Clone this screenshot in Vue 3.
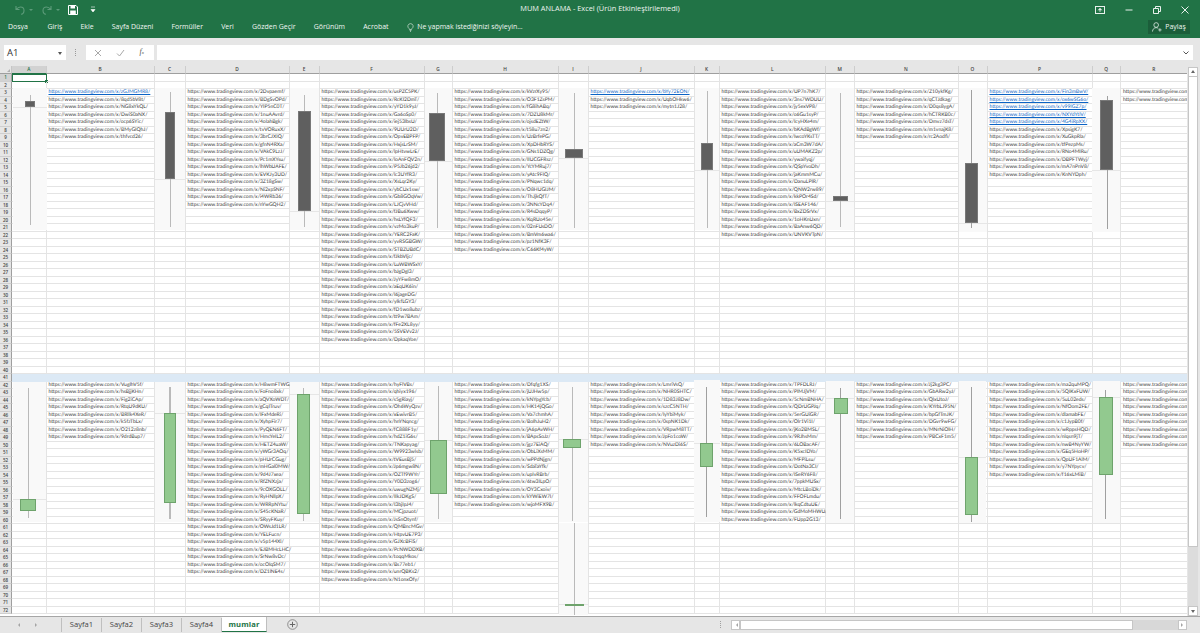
<script setup>
const widths = [34.5,108,31,104,30,105,28,106,30,106,25,106.5,28.5,104,29,105,28.5,66.5]
const letters = 'ABCDEFGHIJKLMNOPQR'.split('')
const gridCols = '12px ' + widths.map(w => w + 'px').join(' ')

const data = {
  B: [[3,'zGJMGMR8 8qd5bV8t NG8xYkQL DwiS0aNX ocp6SYic BMyGIQhJ thfvcd26'],[42,'VugIhV5f hsBjjKHn Fig2iCAp RtqU9dKU BRllk4XeR k5fzTbLx O212z8nb 9drdBup7']],
  D: [[3,'2Dvpaemf BDgSvOPd YIP5nC0T 1nuAAvrd 4olahBgk tvVORuxX 3brCJXIQ gfnN4RXa VAkC9LzJ Pc1mXYsu lhWbUAFE EVKJy3UD 3Z18gSw Ni2xpSNF i4WRb36 nYwGQH2'],[42,'H8wmFTWG FoFno8xk aQVXoWDT gCqITruv IFxMdeRi XyhpFir7 PyQEN6FT HmcYeIL2 HETZ4uaW yWGr3AOq pHUrCGug mHGal0MW 9d4J7xea RfZNXzja 9cOXGOLL RyHNlIpX WRRpNYtu S45cKNaR SRyyFKuy OWsJd1LR YELFucn v5p144Xl EJBMHcLHC SrNw8vDc ocOIqSM7 DZ1lNE4s']],
  F: [[3,'usPZC5PK RcKI2DmT yYD1k9yJ Ga6oSp0 iej53lbsU 9UUrU2D OpvEBPFP HxjsLrSM lpHtvwLrE loAnFQV2n P5Jb26jd2 lc3UYfR3 XsLqr2Ky ybCUx1sw Gb8GOqVw LJCjvVHd fJBu6Xww hsLYfQF3 vzMo3kuP YERC2FaK yvRSGBGW STBZUBdC fJkbVIjc LuWBWSxY bJgDgl3 JyYFw8mO aEqUK6in I6jageDG yIkfLGY3 fD1wo8ubz tt9w7BAm fFe2XL8yy 5SVEVv2J DpkaqYoe'],[42,'hyFlVBs qhiyx196 s5gRiayj Oh6WyQzv xEwivrB5 hnYNqncg fC888F1y hdZ1iG6s TNKapyag W9923wlsb tVEusBj5 Jp6mgw8N OZTf9WYr Y0D3zog6 uwugNZMj IIkJDKgS I3bjIpJ4 MCjpzuot JsSnOtynf QMBncMGv HtpvUE7P3 GJXcBFiS PcNWDDXB toqqMkos Bs77eb1 unrQBKs2 N1onxOfy']],
  H: [[3,'kVzrXy95 O3F1ZsPM fG8ihABq 7DZU8kMr ojsdEZtW t58u7zn2 UzBrfePG XpDHbRYS GNs1DZQg IIUCGFRsz YcYMRuj7 yAtc9FIQ PNqwc1dq O8HUGIJM ThJjkQfT 3NNcYDq4 R4sDqqyP KqRUo45e 02nFUsDO BmVm6wa6 pz1NfK3F C66Kf4yW'],[42,'Dfqfg1XS jUJHw5p kNYpgYcb HK14jQGo Va7chmhA BoIhJuH2 jA6pAvWH BApsSoJz jgz7EiAQ ObLiXsMM wPPdNjgn SdaTaYfk upIvRBrb 6tw3ILpO OY3Cxoiv kYWiEW7I wjoMFX9B']],
  J: [[3,'bYy72EON UqbOHkw6 mytn1J28'],[42,'LmriVsQ NHR0SHTC 1D83J8Dw szcC5NTH IyYbiMyk 0spNK1Dk VRpwM8TT JpFo1coW NVuzDi6S']],
  L: [[3,'UP7n7hK7 3ns7WDUU jy5exVP8 o6Gu1syP IcyHXe4m bKAdBgWf IwcoYKsTT aCm3W7dA uUMAKZ2p ywaifyqj QSpYvoDh jaKmmMCu DanuLPIR QNW2rw89 kkPOr4Sd ISEAF146 BxZDSrVx 1oHKnUxn BaAnw6QD UNVKVTpN'],[42,'TPFDLRJ PIMJjVM 5cNmBNHA QDrUGPJq 5erGUiGR Olr1Vi1I jKo2BMSL 9RJhsMm 6LOBacAF K5xcIDYo MFPiLsu DotNa3CI ISeRY6F8 7ppkMUSx MtcLBoiDk FFOFLmdu lkqCdtuUE GdMoMHWU FUpp2G13']],
  N: [[3,'Z10ykfKg qCTJdkag D0qs8ygA hCTRKB0c Dmvz7dsT m1vnajK8 rc2Aodfi'],[42,'Jj2kg3PC GbARw2yJ QlxUtoJ KYrbLJ95N bpGfTmJK DGvr9wFG MNrNiOlH PBCxF1m5']],
  P: [[3,'Fin3mBwV ox6wSG6o v99IGZ7p NXYdYtlV 4G4iRpXX XpsigK7 XuGkpRla tfPezpMs RNo4MIRu DBPFTWyj mA7nPnV8 KnNYDph'],[42,'ma2quMPQ 5QIKxFUW 5uL02eds NfOom2FE dlamabFE c1JypB0f wRppsHQD nlqsn9jT nwB4NyYW GEq5HoHP QpUF1AlM y7NYpycv f16xLMiB']],
  R: [[3,'TbQw2mLs PxK9dVna'],[42,'hT3kPzQa Mn8vYc2L Rd5sXwJe uK7gFq1B Zp4tNhOi Lc6yVm9A Qe2jSrUx Wf8bGk3D Ny5oHt7C']]
}
const links = new Set(['B3','J3','P3','P4','P5','P6','P7'])
const cellText = {}
for (const col in data) {
  for (const [start, list] of data[col]) {
    list.split(' ').forEach((id, i) => { cellText[col + (start + i)] = 'https://www.tradingview.com/x/' + id + '/' })
  }
}
const rows = Array.from({ length: 72 }, (_, i) => i + 1)

const SHEET_TOP = 66
const charts = [
  { x:12.5,w:34,y:88,h:142,wx:30,wt:95,wb:225,bl:25,br:35,bt:101,bb:107,ax:107,t:'d' },
  { x:155,w:30,y:88,h:142,wx:170,wt:92,wb:227,bl:165,br:175,bt:112,bb:179,ax:179,t:'d' },
  { x:290,w:29,y:88,h:142,wx:304,wt:95,wb:227,bl:297.5,br:311,bt:111,bb:211,ax:211,t:'d' },
  { x:425,w:27,y:88,h:142,wx:437,wt:93,wb:228,bl:429,br:445,bt:113,bb:161,ax:161,t:'d' },
  { x:559,w:29,y:88,h:142,wx:574,wt:93,wb:228,bl:565,br:583,bt:149,bb:158,ax:158,t:'d' },
  { x:695,w:24,y:88,h:142,wx:707,wt:91,wb:228,bl:701,br:713,bt:143,bb:170,ax:170,t:'d' },
  { x:826,w:28,y:88,h:142,wx:840,wt:93,wb:227,bl:833,br:848,bt:196,bb:201,ax:201,t:'d' },
  { x:959,w:28,y:88,h:144,wx:971,wt:90,wb:228,bl:964.5,br:977.5,bt:163,bb:223,ax:223,t:'d',dk:1 },
  { x:1092,w:28,y:88,h:144,wx:1107,wt:96,wb:229,bl:1100,br:1113,bt:100,bb:170,ax:170,t:'d',dk:1 },
  { x:13,w:33,y:382,h:140,wx:28,wt:388,wb:518,bl:20,br:36,bt:499,bb:511,ax:499,t:'g' },
  { x:155,w:30,y:382,h:140,wx:169.5,wt:387,wb:519,bl:164,br:176,bt:413,bb:503,ax:413,t:'g' },
  { x:290,w:29,y:382,h:140,wx:303,wt:388,wb:521,bl:296.5,br:310,bt:394,bb:514,ax:394,t:'g' },
  { x:425,w:27,y:382,h:140,wx:438,wt:386,wb:519,bl:430,br:446.5,bt:440,bb:494,ax:440,t:'g' },
  { x:559,w:29,y:382,h:140,wx:572,wt:387,wb:521,bl:563,br:581,bt:439,bb:448,ax:439,t:'g' },
  { x:559,w:29,y:523,h:92,wx:574,wt:523,wb:615,bl:565,br:583.5,bt:604,bb:605,ax:604,t:'g' },
  { x:694,w:26,y:380,h:142,wx:706,wt:387,wb:517,bl:699.5,br:713,bt:443,bb:467,ax:443,t:'g',dk:1 },
  { x:826,w:28,y:381,h:142,wx:840,wt:388,wb:519,bl:833.5,br:847.5,bt:398,bb:414,ax:398,t:'g',dk:1 },
  { x:959,w:27,y:381,h:142,wx:971.5,wt:387,wb:522,bl:965,br:978,bt:457,bb:515,ax:457,t:'g',dk:1 },
  { x:1093,w:27,y:381,h:142,wx:1105.5,wt:390,wb:519,bl:1099,br:1113,bt:397,bb:475,ax:397,t:'g',dk:1 }
]
function box(c) { return { left: c.x + 'px', top: (c.y - SHEET_TOP) + 'px', width: c.w + 'px', height: c.h + 'px' } }
function wick(c) { return { left: (c.wx - c.x - 0.5) + 'px', top: (c.wt - c.y) + 'px', height: (c.wb - c.wt) + 'px' } }
function body(c) { return { left: (c.bl - c.x) + 'px', top: (c.bt - c.y) + 'px', width: (c.br - c.bl) + 'px', height: (c.bb - c.bt) + 'px' } }
function axis(c) { return { top: (c.ax - c.y) + 'px' } }

const tabs = ['Giriş','Ekle','Sayfa Düzeni','Formüller','Veri','Gözden Geçir','Görünüm','Acrobat']
const sheets = ['Sayfa1','Sayfa2','Sayfa3','Sayfa4']
</script>

<template>
  <div class="app">
    <header class="ribbon">
      <div class="titlebar">
        <div class="qat">
          <svg class="qi dim" viewBox="0 0 12 10" width="12" height="10"><path d="M2 1v3.5h3.5M2.3 4.3C3.6 2.7 5 2 6.5 2c2 0 3.5 1.5 3.5 3.4S8.7 9 7 9.2" fill="none" stroke="currentColor" stroke-width="1.1"/></svg>
          <span class="caret dim"></span>
          <svg class="qi dim redo" viewBox="0 0 12 10" width="12" height="10"><path d="M10 1v3.5H6.500M9.700 4.300C8.400 2.700 7 2 5.500 2c-2 0-3.500 1.500-3.500 3.400S3.300 9 5 9.200" fill="none" stroke="currentColor" stroke-width="1.100"/></svg>
          <span class="caret dim"></span>
          <svg class="qi save" viewBox="0 0 10 10" width="10" height="10"><path d="M.5.500h7.500l1.500 1.500v7.500h-9z" fill="none" stroke="#fff" stroke-width="1"/><path d="M2.500 1h4.500v2.500H2.500zM2.200 5.500h5.600v4H2.200z" fill="#fff"/></svg>
          <svg class="qi cust" viewBox="0 0 6 7" width="6" height="7"><path d="M1 1h4M1 3.500l2 2.500 2-2.500z" fill="#fff" stroke="#fff" stroke-width=".6"/></svg>
        </div>
        <div class="doc-title">MUM ANLAMA - Excel (Ürün Etkinleştirilemedi)</div>
        <div class="winctl">
          <svg viewBox="0 0 10 8" width="10" height="8"><rect x=".5" y=".5" width="9" height="7" fill="none" stroke="#e8f1ec"/><path d="M5 6V2.500M3.200 4.200 5 2.300l1.800 1.900" fill="#e8f1ec" stroke="#e8f1ec" stroke-width=".8"/></svg>
          <svg viewBox="0 0 8 8" width="8" height="8"><path d="M.5 4h7" stroke="#e8f1ec"/></svg>
          <svg viewBox="0 0 8 8" width="8" height="8"><path d="M.5 2.500h5v5h-5zM2.500 2.500V.5h5v5h-2" fill="none" stroke="#e8f1ec"/></svg>
          <svg viewBox="0 0 8 8" width="8" height="8"><path d="M.5.500l7 7M7.500.500l-7 7" stroke="#e8f1ec"/></svg>
        </div>
      </div>
      <nav class="tabrow">
        <span class="tab dosya">Dosya</span>
        <span v-for="t in tabs" :key="t" class="tab">{{ t }}</span>
        <span class="tell">
          <svg viewBox="0 0 8 10" width="7" height="9"><path d="M4 .6a3 3 0 0 1 1.700 5.500c-.4.300-.5.700-.5 1.200H2.800c0-.5-.1-.9-.5-1.200A3 3 0 0 1 4 .6zM3 8.400h2M3.400 9.500h1.200" fill="none" stroke="#e8f1ec" stroke-width=".7"/></svg>
          <span>Ne yapmak istediğinizi söyleyin...</span>
        </span>
        <span class="share">
          <svg viewBox="0 0 12 12" width="10" height="10"><circle cx="5" cy="3.600" r="2.800" fill="none" stroke="#e8f1ec" stroke-width=".9"/><path d="M.5 11.500c.4-3 2-4.700 4.500-4.700 1 0 1.800.3 2.500.8M9.500 7.500v4M7.500 9.500h4" fill="none" stroke="#e8f1ec" stroke-width=".9"/></svg>
          <span>Paylaş</span>
        </span>
      </nav>
    </header>

    <section class="formula">
      <div class="namebox"><span>A1</span><i class="down"></i></div>
      <span class="grip"></span>
      <div class="fbtns">
        <svg viewBox="0 0 8 8" width="8" height="8"><path d="M1 1l6 6M7 1 1 7" stroke="#a8a8a8" stroke-width="1"/></svg>
        <svg viewBox="0 0 9 8" width="9" height="8"><path d="M1 4.500 3.500 7 8 1" fill="none" stroke="#a8a8a8" stroke-width="1"/></svg>
        <span class="fx">f<small>x</small></span>
      </div>
      <div class="finput"><svg viewBox="0 0 6 4" width="6" height="4"><path d="M.5.500 3 3 5.500.500" fill="none" stroke="#555" stroke-width="1"/></svg></div>
    </section>

    <section class="sheet">
      <div class="grid" :style="{ gridTemplateColumns: gridCols }">
        <div class="corner"><i></i></div>
        <div v-for="l in letters" :key="l" class="colhead" :class="{ on: l === 'A' }">{{ l }}</div>
        <template v-for="r in rows" :key="r">
          <div class="rowhead" :class="{ on: r === 1 }">{{ r }}</div>
          <div v-for="l in letters" :key="l + r" class="cell" :class="{ blue: r === 41, sel: r === 1 && l === 'A' }">
            <span v-if="cellText[l + r]" :class="{ link: links.has(l + r) }">{{ cellText[l + r] }}</span>
          </div>
        </template>
      </div>
      <div v-for="(c, i) in charts" :key="i" class="chart" :style="box(c)">
        <div class="axis" :style="axis(c)"></div>
        <div class="wick" :class="{ dk: c.dk }" :style="wick(c)"></div>
        <div class="candle" :class="c.t === 'g' ? 'green' : 'dark'" :style="body(c)"></div>
      </div>
      <aside class="vscroll">
        <div class="vbtn"><i class="up"></i></div>
        <div class="vthumb"></div>
        <div class="vtrack"></div>
        <div class="vbtn"><i class="dn"></i></div>
      </aside>
    </section>

    <footer class="tabsbar">
      <div class="navs"><i class="l"></i><i class="r"></i></div>
      <div v-for="s in sheets" :key="s" class="sheet-tab">{{ s }}</div>
      <div class="sheet-tab active">mumlar</div>
      <svg class="plus" viewBox="0 0 11 11" width="11" height="11"><circle cx="5.500" cy="5.500" r="4.800" fill="none" stroke="#777" stroke-width=".8"/><path d="M5.500 2.800v5.400M2.800 5.500h5.400" stroke="#666" stroke-width="1"/></svg>
      <span class="vdots"></span>
      <div class="hscroll">
        <div class="hbtn"><i class="l"></i></div>
        <div class="hthumb"></div>
        <div class="htrack"></div>
        <div class="hbtn"><i class="r"></i></div>
      </div>
    </footer>
  </div>
</template>

<style scoped>
.app { width: 1200px; height: 633px; overflow: hidden; display: flex; flex-direction: column; background: #e6e6e6; font-family: "Open Sans", "Liberation Sans", sans-serif; }

.ribbon { height: 38px; background: #217346; color: #f1f6f3; flex: none; display: flex; flex-direction: column; }
.titlebar { height: 19px; display: flex; align-items: center; position: relative; }
.qat { display: flex; align-items: center; padding-left: 14px; }
.qi.dim { color: #5d9b7a; }
.caret { width: 0; height: 0; border: 2px solid transparent; border-top: 2px solid #5d9b7a; margin: 2px 8px 0 3px; }
.cust { margin-left: 12px; }
.doc-title { position: absolute; left: 0; right: 0; top: 3px; text-align: center; font-size: 7.4px; color: #eef4f0; line-height: 11px; }
.winctl { margin-left: auto; display: flex; align-items: center; gap: 20px; padding-right: 11px; }

.tabrow { flex: 1; display: flex; align-items: flex-start; padding: 2px 10px 0 8px; gap: 18.2px; font-size: 6.95px; line-height: 10px; }
.tab { white-space: nowrap; padding-top: 1px; }
.dosya { margin-right: 1.5px; }
.tell { display: flex; align-items: center; gap: 3.5px; margin-left: 0; white-space: nowrap; padding-top: 1px; }
.share { margin-left: auto; background: #1b5e3a; height: 14px; width: 42px; display: flex; align-items: center; justify-content: center; gap: 3px; margin-top: -1px; }

.formula { height: 28px; flex: none; display: flex; align-items: flex-start; padding: 7px 0 0 4px; box-sizing: border-box; gap: 0; }
.namebox { width: 62px; height: 15px; background: #fff; display: flex; align-items: center; justify-content: space-between; padding: 0 4px 0 3px; box-sizing: border-box; font-size: 9.5px; color: #333; }
.down { width: 0; height: 0; border: 2.5px solid transparent; border-top: 3px solid #555; margin-top: 3px; }
.grip { width: 2px; height: 7px; margin: 4px 8px 0 9px; border-left: 1px dotted #999; box-sizing: border-box; }
.fbtns { width: 68px; height: 15px; background: #fff; display: flex; align-items: center; justify-content: space-between; padding: 0 10px 0 8px; box-sizing: border-box; margin-left: 1px; }
.fx { font-family: "Liberation Serif", serif; font-style: italic; font-size: 8px; color: #555; line-height: 10px; }
.fx small { font-size: 5px; }
.finput { width: 1036px; height: 15px; margin-left: 3px; background: #fff; display: flex; align-items: center; justify-content: flex-end; padding-right: 4px; box-sizing: border-box; }

.sheet { flex: 1; position: relative; overflow: hidden; min-height: 0; }
.grid { width: 1187px; height: 550px; display: grid; grid-template-rows: 8px repeat(72, 7.5px) 1fr; background: #fff; overflow: hidden; }
.corner { background: #e6e6e6; border-bottom: 1px solid #9f9f9f; border-right: 1px solid #c6c6c6; box-sizing: border-box; position: relative; }
.corner i { position: absolute; right: 1px; bottom: 1px; width: 0; height: 0; border-left: 3px solid transparent; border-bottom: 3px solid #b0b0b0; }
.colhead { background: #e6e6e6; border-right: 1px solid #cdcdcd; border-bottom: 1px solid #9f9f9f; box-sizing: border-box; font-size: 4.8px; line-height: 7px; text-align: center; color: #444; font-weight: 600; }
.colhead.on { background: #d2d2d2; border-bottom: 1px solid #217346; color: #217346; }
.rowhead { background: #e6e6e6; border-right: 1px solid #9f9f9f; border-bottom: 1px solid #cfcfcf; box-sizing: border-box; font-size: 4.5px; line-height: 7px; text-align: center; color: #444; font-weight: 600; overflow: hidden; }
.rowhead.on { background: #d2d2d2; color: #217346; }
.cell { border-right: 1px solid #e4e4e4; border-bottom: 1px solid #e4e4e4; box-sizing: border-box; font-family: Lato, "Open Sans", sans-serif; font-size: 5.05px; line-height: 6.5px; color: #3a3a3a; white-space: nowrap; padding-left: 2px; min-width: 0; position: relative; text-rendering: geometricPrecision; }
.cell.blue { background: #dce9f5; border-color: #dce9f5; }
.cell.sel { box-shadow: inset 0 0 0 1px #217346; border: 0; }
.cell.sel::after { content: ""; position: absolute; right: -1.5px; bottom: -1.5px; width: 3px; height: 3px; background: #217346; }
.link { color: #0b63c5; text-decoration: underline; }

.chart { position: absolute; background: #f9f9f9; z-index: 2; }
.axis { position: absolute; left: 0; right: 0; height: 1px; background: #e6e6e6; }
.wick { position: absolute; width: 1.5px; background: #bababa; }
.wick.dk { width: 1px; background: #a0a0a0; }
.candle { position: absolute; box-sizing: border-box; }
.candle.dark { background: #5f5f5f; border: 1px solid #787878; }
.candle.green { background: #92c98f; border: 1px solid #6ea36c; }

.vscroll { position: absolute; right: 2px; top: 1px; bottom: 0; width: 10px; display: flex; flex-direction: column; z-index: 3; }
.vbtn { height: 10px; background: #fff; border: 1px solid #c6c6c6; box-sizing: border-box; display: flex; align-items: center; justify-content: center; flex: none; }
.vthumb { height: 470px; background: #fff; border: 1px solid #c6c6c6; border-top: 0; box-sizing: border-box; flex: none; }
.vtrack { flex: 1; background: #dcdcdc; }
.up { width: 0; height: 0; border: 2px solid transparent; border-bottom: 3px solid #666; margin-top: -3px; }
.dn { width: 0; height: 0; border: 2px solid transparent; border-top: 3px solid #666; margin-bottom: -3px; }

.tabsbar { height: 17px; flex: none; display: flex; align-items: flex-start; background: #e6e6e6; border-top: 1px solid #a6a6a6; box-sizing: border-box; position: relative; font-size: 7.6px; color: #444; }
.navs { width: 62px; height: 14px; display: flex; align-items: center; gap: 15px; padding-left: 16px; box-sizing: border-box; border-right: 1px solid #bfbfbf; flex: none; margin-top: 1px; }
.navs .l, .hbtn .l { width: 0; height: 0; border: 2px solid transparent; border-right: 2.5px solid #a5a5a5; }
.navs .r, .hbtn .r { width: 0; height: 0; border: 2px solid transparent; border-left: 2.5px solid #a5a5a5; }
.sheet-tab { width: 40px; height: 14px; margin-top: 1px; line-height: 13px; text-align: center; border-right: 1px solid #bfbfbf; box-sizing: border-box; flex: none; }
.sheet-tab.active { background: #fff; width: 45px; height: 15px; margin-top: 0; line-height: 14px; font-weight: 700; color: #217346; border: 0; border-bottom: 1px solid #217346; border-right: 1px solid #bfbfbf; letter-spacing: .15px; }
.plus { margin: 2px 0 0 20px; flex: none; }
.vdots { position: absolute; left: 720px; top: 4px; height: 7px; border-left: 1px dotted #a0a0a0; }
.hscroll { position: absolute; left: 731px; top: 3px; width: 456px; height: 10px; display: flex; }
.hbtn { width: 9px; background: #fff; border: 1px solid #c6c6c6; box-sizing: border-box; display: flex; align-items: center; justify-content: center; flex: none; }
.hthumb { width: 393px; background: #fff; border: 1px solid #c6c6c6; box-sizing: border-box; flex: none; }
.htrack { flex: 1; background: #d8d8d8; }
</style>
